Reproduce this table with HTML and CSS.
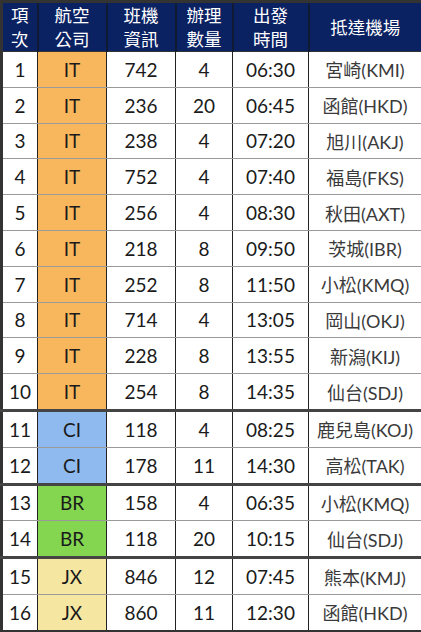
FILE: index.html
```html
<!DOCTYPE html>
<html lang="zh-Hant">
<head>
<meta charset="utf-8">
<link rel="stylesheet" href="styles.css">
</head>
<body>
<table class="flights">
  <colgroup>
    <col class="c-no"><col class="c-air"><col class="c-flt"><col class="c-qty"><col class="c-time"><col class="c-dest">
  </colgroup>
  <thead>
    <tr>
      <th>項<br>次</th>
      <th>航空<br>公司</th>
      <th>班機<br>資訊</th>
      <th>辦理<br>數量</th>
      <th>出發<br>時間</th>
      <th>抵達機場</th>
    </tr>
  </thead>
  <tbody>
    <tr><td>1</td><td class="it">IT</td><td>742</td><td>4</td><td>06:30</td><td class="dest">宮崎(KMI)</td></tr>
    <tr><td>2</td><td class="it">IT</td><td>236</td><td>20</td><td>06:45</td><td class="dest">函館(HKD)</td></tr>
    <tr><td>3</td><td class="it">IT</td><td>238</td><td>4</td><td>07:20</td><td class="dest">旭川(AKJ)</td></tr>
    <tr><td>4</td><td class="it">IT</td><td>752</td><td>4</td><td>07:40</td><td class="dest">福島(FKS)</td></tr>
    <tr><td>5</td><td class="it">IT</td><td>256</td><td>4</td><td>08:30</td><td class="dest">秋田(AXT)</td></tr>
    <tr><td>6</td><td class="it">IT</td><td>218</td><td>8</td><td>09:50</td><td class="dest">茨城(IBR)</td></tr>
    <tr><td>7</td><td class="it">IT</td><td>252</td><td>8</td><td>11:50</td><td class="dest">小松(KMQ)</td></tr>
    <tr><td>8</td><td class="it">IT</td><td>714</td><td>4</td><td>13:05</td><td class="dest">岡山(OKJ)</td></tr>
    <tr><td>9</td><td class="it">IT</td><td>228</td><td>8</td><td>13:55</td><td class="dest">新潟(KIJ)</td></tr>
    <tr class="group-end"><td>10</td><td class="it">IT</td><td>254</td><td>8</td><td>14:35</td><td class="dest">仙台(SDJ)</td></tr>
    <tr><td>11</td><td class="ci">CI</td><td>118</td><td>4</td><td>08:25</td><td class="dest">鹿兒島(KOJ)</td></tr>
    <tr class="group-end"><td>12</td><td class="ci">CI</td><td>178</td><td>11</td><td>14:30</td><td class="dest">高松(TAK)</td></tr>
    <tr><td>13</td><td class="br">BR</td><td>158</td><td>4</td><td>06:35</td><td class="dest">小松(KMQ)</td></tr>
    <tr class="group-end"><td>14</td><td class="br">BR</td><td>118</td><td>20</td><td>10:15</td><td class="dest">仙台(SDJ)</td></tr>
    <tr><td>15</td><td class="jx">JX</td><td>846</td><td>12</td><td>07:45</td><td class="dest">熊本(KMJ)</td></tr>
    <tr><td>16</td><td class="jx">JX</td><td>860</td><td>11</td><td>12:30</td><td class="dest">函館(HKD)</td></tr>
  </tbody>
</table>
</body>
</html>
```
FILE: styles.css
```css
html, body {
  margin: 0;
  padding: 0;
  background: #ffffff;
}

.flights {
  width: 421px;
  table-layout: fixed;
  border-collapse: collapse;
  border: 3px solid #333333;
  font-family: "Lato", "Noto Sans CJK TC", sans-serif;
}

.c-no { width: 36px; }
.c-air { width: 69px; }
.c-flt { width: 69px; }
.c-qty { width: 57px; }
.c-time { width: 76px; }
.c-dest { width: 114px; }

.flights th {
  height: 47px;
  padding: 0;
  background: #0a2162;
  color: #ffffff;
  font-family: "Noto Sans CJK TC", sans-serif;
  font-weight: 400;
  font-size: 17.5px;
  line-height: 24px;
  text-align: center;
  border-left: 2px solid #111a33;
  border-right: 2px solid #111a33;
  border-bottom: 1px solid #333333;
}

.flights td {
  height: 34.8px;
  padding: 0;
  text-align: center;
  font-size: 19px;
  color: #1a1a1a;
  border-left: 1px solid #222222;
  border-right: 1px solid #222222;
  border-bottom: 1px solid #9a9a9a;
}

.flights tr.group-end td {
  border-bottom: 3px solid #444444;
}

.flights td.dest {
  font-size: 18px;
  color: #3a3a3a;
}

.it { background: #f8b75c; }
.ci { background: #8fbaf0; }
.br { background: #84d651; }
.jx { background: #f5e6a2; }
```
